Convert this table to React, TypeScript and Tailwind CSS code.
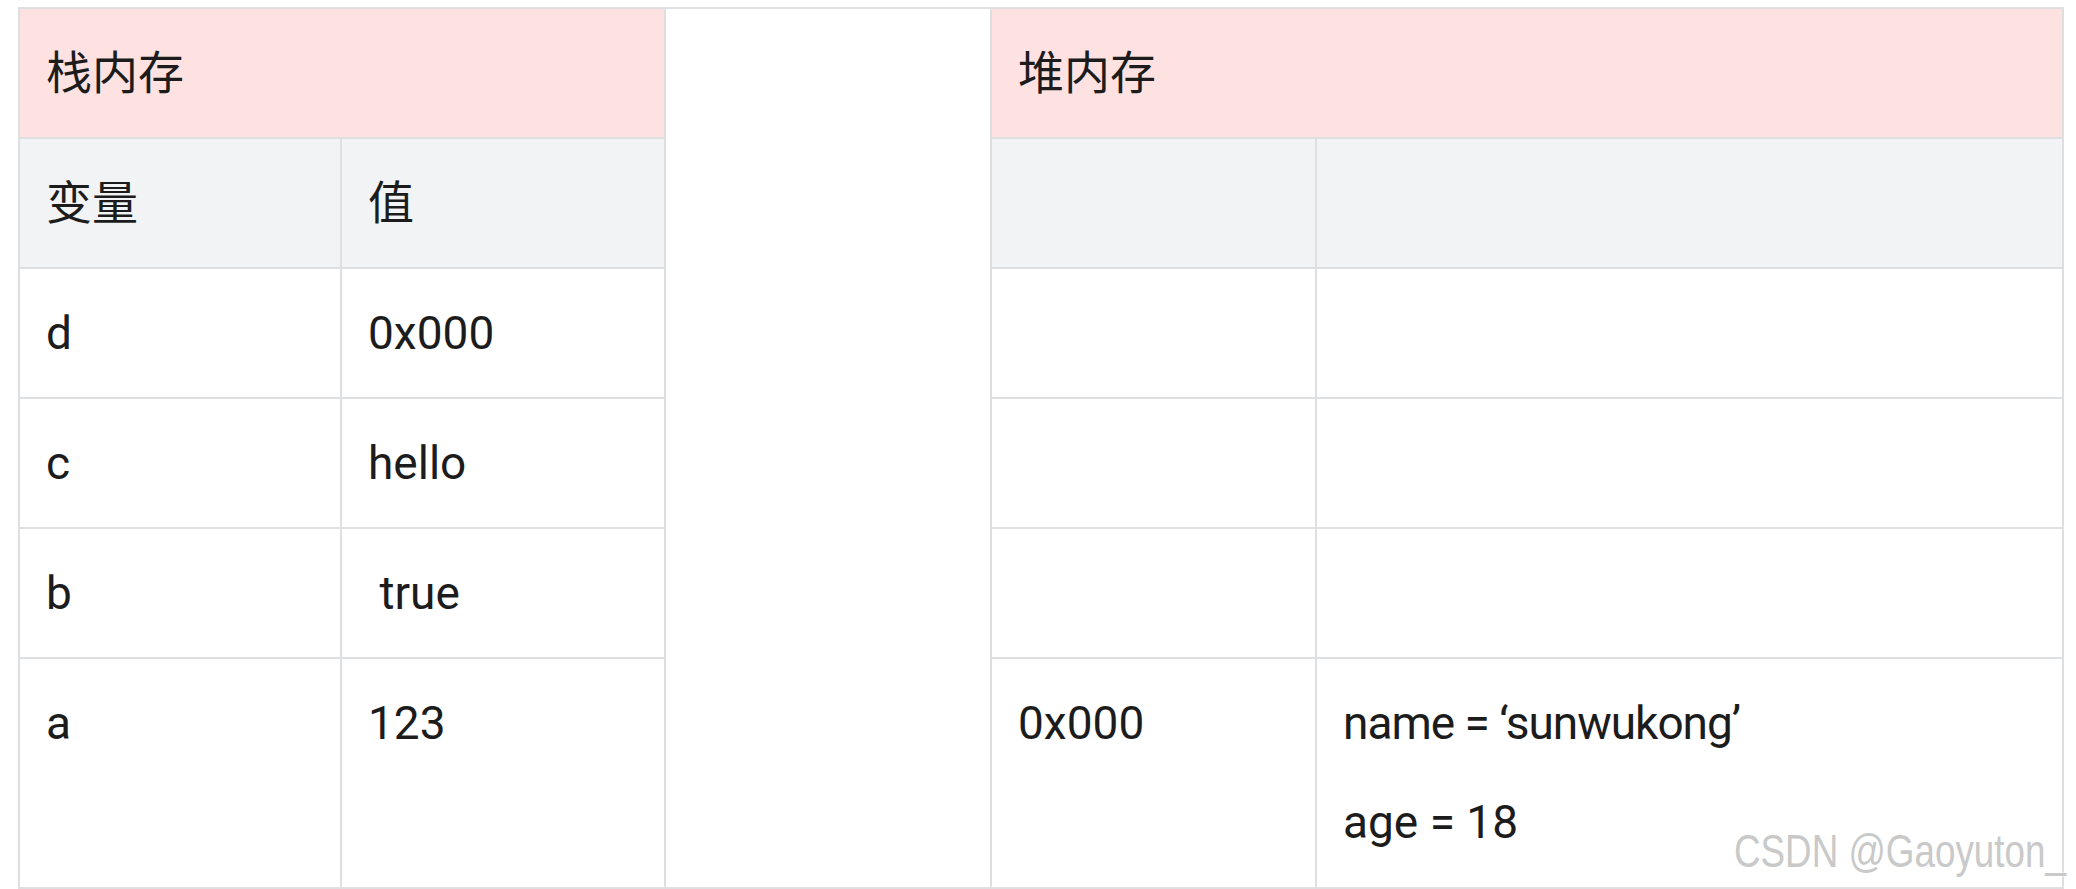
import React from "react";

const cell = "bg-white flex items-center px-[26px]";
const head = "bg-[#f2f3f5] flex items-center px-[26px]";
const pink = "bg-[#fee2e2] flex items-center px-[26px] col-span-2";
const last = "bg-white px-[26px] pt-[34px]";

const rows: [string, string, string, string][] = [
  ["d", "0x000", "", ""],
  ["c", "hello", "", ""],
  ["b", " true", "", ""],
];

export default function App() {
  return (
    <div className="relative w-[2076px] h-[889px] bg-white overflow-hidden font-['Roboto','Noto_Sans_CJK_SC',sans-serif] text-[46px] leading-[60px] text-[#1c1c1c]">
      <div className="absolute left-[18px] top-[7px] grid grid-cols-[320px_322px_324px_323px_745px] grid-rows-[128px_128px_128px_128px_128px_228px] gap-[2px] p-[2px] bg-[#dedfe0]">
        <div className="bg-white col-start-3 row-start-1 row-span-6"></div>

        <div className={pink}>栈内存</div>
        <div className={pink}>堆内存</div>

        <div className={head}>变量</div>
        <div className={head}>值</div>
        <div className={head}></div>
        <div className={head}></div>

        {rows.map((r, i) => (
          <React.Fragment key={i}>
            <div className={cell}>{r[0]}</div>
            <div className={cell + " whitespace-pre"}>{r[1]}</div>
            <div className={cell}>{r[2]}</div>
            <div className={cell}>{r[3]}</div>
          </React.Fragment>
        ))}

        <div className={last}>a</div>
        <div className={last}>123</div>
        <div className={last}>0x000</div>
        <div className={last}>
          <p className="tracking-[-1px]">name = ‘sunwukong’</p>
          <p className="mt-[39px]">age = 18</p>
        </div>
      </div>

      {/* watermark */}
      <div className="absolute right-[10px] top-[824px] origin-right scale-x-[0.8] font-['Liberation_Sans',sans-serif] text-[46px] leading-[54px] text-[#c9c9c9] [text-shadow:0_0_2px_#fff,0_0_2px_#fff] whitespace-nowrap">
        CSDN @Gaoyuton_
      </div>
    </div>
  );
}
